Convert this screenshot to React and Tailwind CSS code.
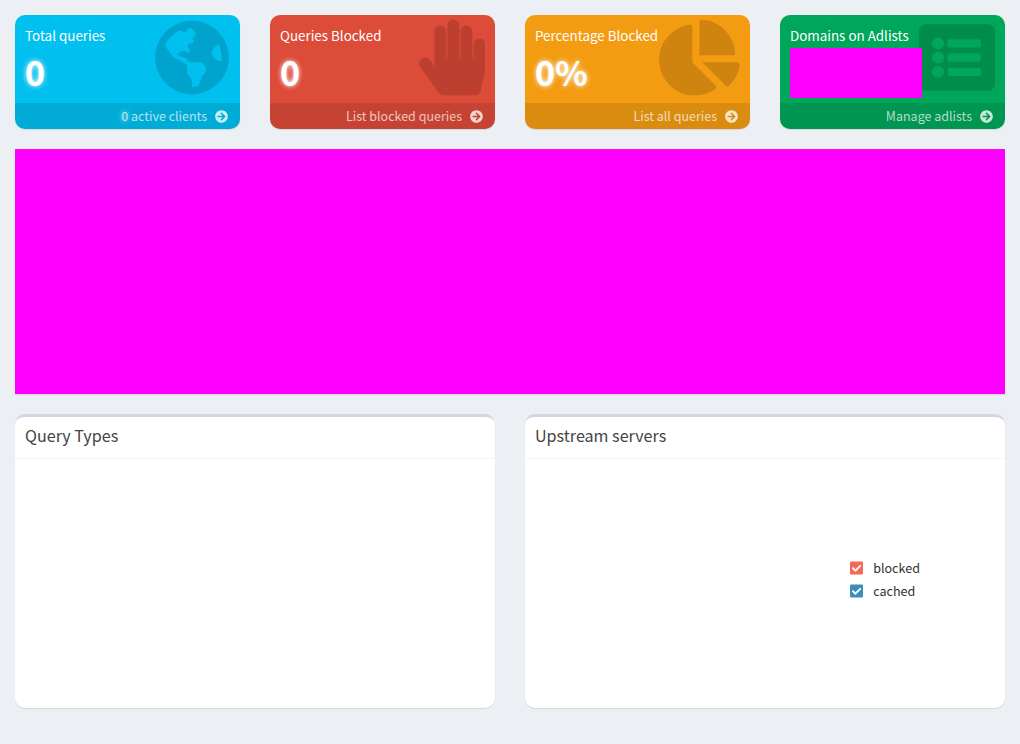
import React from "react";
import {
  FaGlobeAmericas,
  FaHandPaper,
  FaChartPie,
  FaListAlt,
  FaArrowCircleRight,
  FaCheckSquare,
} from "react-icons/fa";

const cards = [
  { title: "Total queries", value: "0", glowing: "0", footer: " active clients", color: "bg-[#00c0ef]", Icon: FaGlobeAmericas, iconWidth: "w-[76px]" },
  { title: "Queries Blocked", value: "0", footer: "List blocked queries", color: "bg-[#dd4b39]", Icon: FaHandPaper, iconWidth: "w-[66.5px]" },
  { title: "Percentage Blocked", value: "0%", footer: "List all queries", color: "bg-[#f39c12]", Icon: FaChartPie, iconWidth: "w-[81px]" },
  { title: "Domains on Adlists", value: null, footer: "Manage adlists", color: "bg-[#00a65a]", Icon: FaListAlt, iconWidth: "w-[76px]" },
];

function StatCard({ title, value, glowing, footer, color, Icon, iconWidth }) {
  return (
    <section className={`relative flex h-[114px] flex-col overflow-hidden rounded-[10px] text-white shadow-[0_1px_1px_rgba(0,0,0,0.1)] ${color}`}>
      <Icon className={`absolute right-[10px] top-[4px] h-[76px] translate-y-[0.6px] text-black/15 ${iconWidth}`} />
      <div className="relative flex h-[88px] flex-col px-[10px] pt-[10px]">
        <p className="h-[23px] text-[13.4px] leading-[21px]">{title}</p>
        {value === null ? (
          <div className="h-[50px] w-[132px] bg-[#ff00ff]" />
        ) : (
          <h3 className="text-[34px] leading-[48px] font-bold [text-shadow:0_0_5px_#fff]">{value}</h3>
        )}
      </div>
      <a className="relative flex h-[26px] items-center justify-end bg-black/10 pr-[12px] text-[12.5px] leading-[20px] text-white/70">
        <span className="whitespace-pre">
          {glowing && <span className="[text-shadow:0_0_5px_rgba(255,255,255,0.7)]">{glowing}</span>}
          {footer}
        </span>
        <FaArrowCircleRight className="ml-[8px] size-[13px] text-white/78" />
      </a>
    </section>
  );
}

function Panel({ title, children }) {
  return (
    <section className="flex h-[294px] flex-col rounded-[10px] border-t-[3px] border-[#d2d6de] bg-white shadow-[0_1px_1px_rgba(0,0,0,0.1)]">
      <header className="h-[42px] border-b border-[#f4f4f4] px-[10px] pt-[8px]">
        <h3 className="text-[16.1px] leading-[20px] text-[#444]">{title}</h3>
      </header>
      <div className="flex flex-1 items-center justify-end">{children}</div>
    </section>
  );
}

export default function App() {
  return (
    <main className="flex h-[744px] flex-col gap-5 bg-[#ecf0f5] p-[15px] font-['Noto_Sans_CJK_SC',sans-serif]">
      <div className="grid grid-cols-4 gap-[30px]">
        {cards.map((card) => (
          <StatCard key={card.title} {...card} />
        ))}
      </div>
      <div className="h-[245px] bg-[#ff00ff] shadow-[0_1px_1px_rgba(0,0,0,0.1)]" />
      <div className="grid grid-cols-2 gap-[30px]">
        <Panel title="Query Types" />
        <Panel title="Upstream servers">
          <ul className="mb-[10px] w-[155px] text-[12.55px] leading-[23px] text-[#333]">
            <li className="flex items-center">
              <FaCheckSquare className="mr-[10px] h-[15px] w-[13.2px] translate-y-[0.5px] text-[#f56954]" />
              blocked
            </li>
            <li className="flex items-center">
              <FaCheckSquare className="mr-[10px] h-[15px] w-[13.2px] translate-y-[0.5px] text-[#3c8dbc]" />
              cached
            </li>
          </ul>
        </Panel>
      </div>
    </main>
  );
}
